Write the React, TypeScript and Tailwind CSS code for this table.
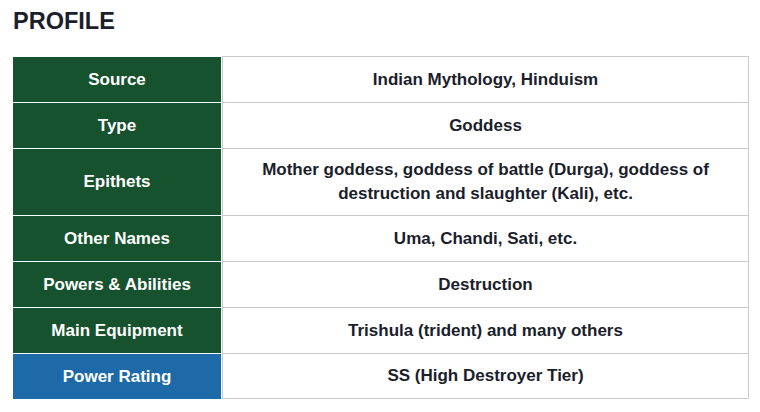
const rows: { label: string; value: string; blue?: boolean }[] = [
  { label: 'Source', value: 'Indian Mythology, Hinduism' },
  { label: 'Type', value: 'Goddess' },
  {
    label: 'Epithets',
    value: 'Mother goddess, goddess of battle (Durga), goddess of destruction and slaughter (Kali), etc.',
  },
  { label: 'Other Names', value: 'Uma, Chandi, Sati, etc.' },
  { label: 'Powers & Abilities', value: 'Destruction' },
  { label: 'Main Equipment', value: 'Trishula (trident) and many others' },
  { label: 'Power Rating', value: 'SS (High Destroyer Tier)', blue: true },
];

export default function App() {
  return (
    <div className="min-h-screen bg-white font-['Liberation_Sans',Arial,sans-serif] text-[#1b1e2b]">
      <div className="px-[13px] pt-[6px]">
        <h2 className="text-[23.5px] font-bold leading-[30px]">PROFILE</h2>

        {/* Profile table */}
        <div className="mt-[20px] w-[736px]">
          {rows.map((row, i) => (
            <div key={row.label} className="flex">
              <div className="w-[208px] pt-[1px]">
                <div
                  className={`flex h-full items-center justify-center px-2 text-center text-[17px] font-bold leading-6 text-white ${
                    row.blue ? 'bg-[#1e6aa9]' : 'bg-[#17522f]'
                  }`}
                >
                  {row.label}
                </div>
              </div>
              <div
                className={`ml-[1px] flex min-h-[46px] w-[527px] items-center justify-center border-x border-t border-[#c8ccd1] px-[30px] py-[9px] text-center text-[17px] font-bold leading-6 ${
                  i === rows.length - 1 ? 'border-b' : ''
                }`}
              >
                {row.value}
              </div>
            </div>
          ))}
        </div>
      </div>
    </div>
  );
}
